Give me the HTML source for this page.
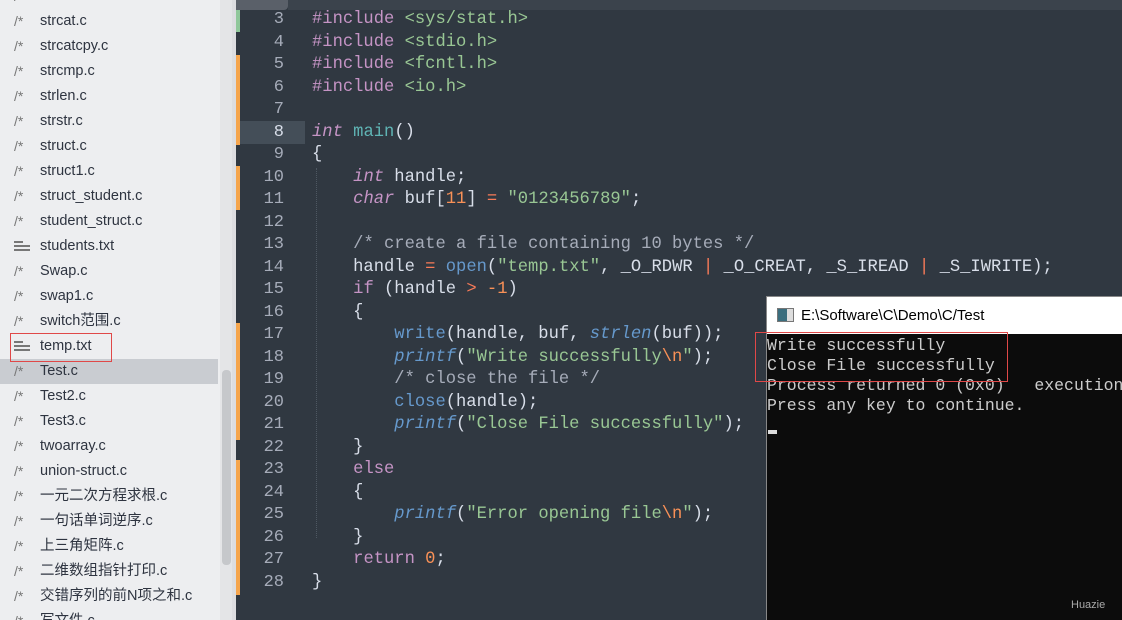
<!DOCTYPE html>
<html><head><meta charset="utf-8"><style>
*{margin:0;padding:0;box-sizing:border-box}
html,body{width:1122px;height:620px;overflow:hidden}
body{position:relative;background:#303841;font-family:"Liberation Sans","Noto Sans CJK SC",sans-serif}
#side{position:absolute;left:0;top:0;width:232px;height:620px;background:#edeef0;overflow:hidden}
.row{position:absolute;left:0;width:218px;height:25px;font-size:14.5px;color:#2e3440;line-height:25px}
.row .ic{position:absolute;left:14px;color:#777;font-size:14px}
.row .t{position:absolute;left:40px}
.txt{position:absolute;left:14px;top:7px;width:16px;height:11px}
.txt i{display:block;height:1.5px;background:#777;margin-bottom:2.5px}
.txt i:first-child{width:9px}
#sb{position:absolute;left:220px;top:0;width:12px;height:620px;background:#e4e5e7}
#thumb{position:absolute;left:222px;top:370px;width:9px;height:195px;background:#c6c8cb;border-radius:4px}
#sep{position:absolute;left:232px;top:0;width:4px;height:620px;background:#dcdde0}
#ed{position:absolute;left:236px;top:0;width:886px;height:620px;background:#303841;overflow:hidden}
.ln{position:absolute;left:0;width:48px;text-align:right;color:#a6acb9;font:17px "Liberation Mono",monospace;height:22.5px;line-height:22.5px}
.cl{position:absolute;left:76px;white-space:pre;color:#d8dee9;font:17.15px "Liberation Mono",monospace;height:22.5px;line-height:22.5px}
.k{color:#c594c5;font-style:italic}.f{color:#5fb4b4}.b{color:#6699cc}.bi{color:#6699cc;font-style:italic}.s{color:#99c794}.n{color:#f99157}.o{color:#f97b58}.c{color:#a6acb9}.p{color:#c594c5}
.mk{position:absolute;left:0;width:4px}
#con{position:absolute;left:766px;top:296px;width:356px;height:324px;background:#0c0c0c;border:1px solid #888;border-right:none;border-bottom:none;overflow:hidden}
#tb{height:37px;background:#fff;font-size:15px;color:#000;line-height:37px;padding-left:34px;position:relative;white-space:nowrap}
#ct{position:absolute;left:0;top:39px;font:16.5px "Liberation Mono",monospace;color:#cccccc;line-height:20px;white-space:pre}
.red{position:absolute;border:1px solid #e04848}
</style></head><body>
<div id="side">
<div class="row" style="top:-16px"><span class="ic">/*</span><span class="t">strdarle</span></div>
<div class="row" style="top:9px"><span class="ic">/*</span><span class="t">strcat.c</span></div>
<div class="row" style="top:34px"><span class="ic">/*</span><span class="t">strcatcpy.c</span></div>
<div class="row" style="top:59px"><span class="ic">/*</span><span class="t">strcmp.c</span></div>
<div class="row" style="top:84px"><span class="ic">/*</span><span class="t">strlen.c</span></div>
<div class="row" style="top:109px"><span class="ic">/*</span><span class="t">strstr.c</span></div>
<div class="row" style="top:134px"><span class="ic">/*</span><span class="t">struct.c</span></div>
<div class="row" style="top:159px"><span class="ic">/*</span><span class="t">struct1.c</span></div>
<div class="row" style="top:184px"><span class="ic">/*</span><span class="t">struct_student.c</span></div>
<div class="row" style="top:209px"><span class="ic">/*</span><span class="t">student_struct.c</span></div>
<div class="row" style="top:234px"><span class="txt"><i></i><i></i><i></i></span><span class="t">students.txt</span></div>
<div class="row" style="top:259px"><span class="ic">/*</span><span class="t">Swap.c</span></div>
<div class="row" style="top:284px"><span class="ic">/*</span><span class="t">swap1.c</span></div>
<div class="row" style="top:309px"><span class="ic">/*</span><span class="t">switch范围.c</span></div>
<div class="row" style="top:334px"><span class="txt"><i></i><i></i><i></i></span><span class="t">temp.txt</span></div>
<div class="row" style="top:359px;background:#c9ccd1"><span class="ic">/*</span><span class="t">Test.c</span></div>
<div class="row" style="top:384px"><span class="ic">/*</span><span class="t">Test2.c</span></div>
<div class="row" style="top:409px"><span class="ic">/*</span><span class="t">Test3.c</span></div>
<div class="row" style="top:434px"><span class="ic">/*</span><span class="t">twoarray.c</span></div>
<div class="row" style="top:459px"><span class="ic">/*</span><span class="t">union-struct.c</span></div>
<div class="row" style="top:484px"><span class="ic">/*</span><span class="t">一元二次方程求根.c</span></div>
<div class="row" style="top:509px"><span class="ic">/*</span><span class="t">一句话单词逆序.c</span></div>
<div class="row" style="top:534px"><span class="ic">/*</span><span class="t">上三角矩阵.c</span></div>
<div class="row" style="top:559px"><span class="ic">/*</span><span class="t">二维数组指针打印.c</span></div>
<div class="row" style="top:584px"><span class="ic">/*</span><span class="t">交错序列的前N项之和.c</span></div>
<div class="row" style="top:609px"><span class="ic">/*</span><span class="t">写文件.c</span></div>
<div class="red" style="left:10px;top:333px;width:102px;height:29px"></div>
</div>
<div id="sb"></div><div id="thumb"></div><div id="sep"></div>
<div id="ed">
<div style="position:absolute;left:0;top:0;width:52px;height:10px;background:#5a6069;border-radius:0 0 4px 0"></div>
<div style="position:absolute;left:52px;top:0;right:0;height:10px;background:#3b434c"></div>
<div style="position:absolute;left:4px;top:121px;width:65px;height:23px;background:#444e58"></div>
<div class="mk" style="top:10px;height:22px;background:#8fc79a"></div>
<div class="mk" style="top:55px;height:90px;background:#f5a54c"></div>
<div class="mk" style="top:166px;height:44px;background:#f5a54c"></div>
<div class="mk" style="top:323px;height:117px;background:#f5a54c"></div>
<div class="mk" style="top:460px;height:135px;background:#f5a54c"></div>
<div style="position:absolute;left:80px;top:168px;height:370px;border-left:1px dotted #4e5862"></div>
<div class="ln" style="top:9px">3</div><div class="cl" style="top:9px"><span class="p">#include</span> <span class="s">&lt;sys/stat.h&gt;</span></div>
<div class="ln" style="top:31.5px">4</div><div class="cl" style="top:31.5px"><span class="p">#include</span> <span class="s">&lt;stdio.h&gt;</span></div>
<div class="ln" style="top:54px">5</div><div class="cl" style="top:54px"><span class="p">#include</span> <span class="s">&lt;fcntl.h&gt;</span></div>
<div class="ln" style="top:76.5px">6</div><div class="cl" style="top:76.5px"><span class="p">#include</span> <span class="s">&lt;io.h&gt;</span></div>
<div class="ln" style="top:99px">7</div>
<div class="ln" style="top:121.5px;color:#d8dee9">8</div><div class="cl" style="top:121.5px"><span class="k">int</span> <span class="f">main</span>()</div>
<div class="ln" style="top:144px">9</div><div class="cl" style="top:144px">{</div>
<div class="ln" style="top:166.5px">10</div><div class="cl" style="top:166.5px">    <span class="k">int</span> handle;</div>
<div class="ln" style="top:189px">11</div><div class="cl" style="top:189px">    <span class="k">char</span> buf[<span class="n">11</span>] <span class="o">=</span> <span class="s">"0123456789"</span>;</div>
<div class="ln" style="top:211.5px">12</div>
<div class="ln" style="top:234px">13</div><div class="cl" style="top:234px">    <span class="c">/* create a file containing 10 bytes */</span></div>
<div class="ln" style="top:256.5px">14</div><div class="cl" style="top:256.5px">    handle <span class="o">=</span> <span class="b">open</span>(<span class="s">"temp.txt"</span>, _O_RDWR <span class="o">|</span> _O_CREAT, _S_IREAD <span class="o">|</span> _S_IWRITE);</div>
<div class="ln" style="top:279px">15</div><div class="cl" style="top:279px">    <span class="p">if</span> (handle <span class="o">&gt;</span> <span class="n">-1</span>)</div>
<div class="ln" style="top:301.5px">16</div><div class="cl" style="top:301.5px">    {</div>
<div class="ln" style="top:324px">17</div><div class="cl" style="top:324px">        <span class="b">write</span>(handle, buf, <span class="bi">strlen</span>(buf));</div>
<div class="ln" style="top:346.5px">18</div><div class="cl" style="top:346.5px">        <span class="bi">printf</span>(<span class="s">"Write successfully<span class="n">\n</span>"</span>);</div>
<div class="ln" style="top:369px">19</div><div class="cl" style="top:369px">        <span class="c">/* close the file */</span></div>
<div class="ln" style="top:391.5px">20</div><div class="cl" style="top:391.5px">        <span class="b">close</span>(handle);</div>
<div class="ln" style="top:414px">21</div><div class="cl" style="top:414px">        <span class="bi">printf</span>(<span class="s">"Close File successfully"</span>);</div>
<div class="ln" style="top:436.5px">22</div><div class="cl" style="top:436.5px">    }</div>
<div class="ln" style="top:459px">23</div><div class="cl" style="top:459px">    <span class="p">else</span></div>
<div class="ln" style="top:481.5px">24</div><div class="cl" style="top:481.5px">    {</div>
<div class="ln" style="top:504px">25</div><div class="cl" style="top:504px">        <span class="bi">printf</span>(<span class="s">"Error opening file<span class="n">\n</span>"</span>);</div>
<div class="ln" style="top:526.5px">26</div><div class="cl" style="top:526.5px">    }</div>
<div class="ln" style="top:549px">27</div><div class="cl" style="top:549px">    <span class="p">return</span> <span class="n">0</span>;</div>
<div class="ln" style="top:571.5px">28</div><div class="cl" style="top:571.5px">}</div>
</div>
<div id="con">
<div id="tb"><span style="position:absolute;left:10px;top:11px;width:17px;height:14px;border:1px solid #777;background:linear-gradient(90deg,#3b6e7e 0 60%,#ddd 60%)"></span>E:\Software\C\Demo\C/Test</div>
<div id="ct">Write successfully
Close File successfully
Process returned 0 (0x0)   execution time
Press any key to continue.
</div>
<div style="position:absolute;left:1px;top:133px;width:9px;height:4px;background:#ddd"></div>
<div style="position:absolute;left:304px;top:302px;font-size:11px;color:#aaa">Huazie</div>
</div>
<div class="red" style="left:755px;top:332px;width:253px;height:50px"></div>
</body></html>
